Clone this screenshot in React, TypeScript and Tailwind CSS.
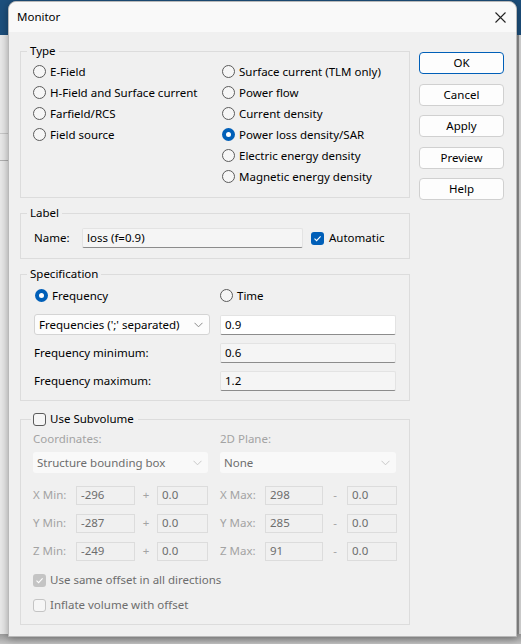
import React from "react";

const FONT = { fontFamily: '"Noto Sans", "Open Sans", sans-serif' };

function Radio({ label, checked = false }: { label: string; checked?: boolean }) {
  return (
    <div className="flex h-[21px] items-center gap-[4px]">
      {checked ? (
        <span className="flex h-[13px] w-[13px] items-center justify-center rounded-full bg-[#005fb8]">
          <span className="h-[5px] w-[5px] rounded-full bg-white" />
        </span>
      ) : (
        <span className="h-[13px] w-[13px] rounded-full border border-[#5b5b5b] bg-[#f6f6f6]" />
      )}
      <span>{label}</span>
    </div>
  );
}

function Check({ checked = false, disabled = false }: { checked?: boolean; disabled?: boolean }) {
  if (checked) {
    return (
      <span
        className={`flex h-[13px] w-[13px] items-center justify-center rounded-[3px] ${
          disabled ? "bg-[#c4c4c4]" : "bg-[#005fb8]"
        }`}
      >
        <svg width="9" height="9" viewBox="0 0 9 9" fill="none">
          <path d="M1.5 4.6 L3.6 6.6 L7.6 2.4" stroke="white" strokeWidth="1.1" />
        </svg>
      </span>
    );
  }
  return (
    <span
      className={`h-[13px] w-[13px] rounded-[3px] border bg-[#f6f6f6] ${
        disabled ? "border-[#c4c4c4]" : "border-[#5b5b5b]"
      }`}
    />
  );
}

function Chevron({ light = false }: { light?: boolean }) {
  return (
    <svg width="9" height="6" viewBox="0 0 9 6" fill="none">
      <path d="M0.5 0.8 L4.5 4.8 L8.5 0.8" stroke={light ? "#c8c8c8" : "#8a8a8a"} strokeWidth="1" />
    </svg>
  );
}

function Field({ value, white = false, className = "" }: { value: string; white?: boolean; className?: string }) {
  return (
    <div
      className={`flex h-[20px] items-center rounded-[2px] border border-[#e3e3e3] border-b-[#8c8c8c] px-[4px] ${
        white ? "bg-white" : "bg-[#f5f5f5]"
      } ${className}`}
    >
      {value}
    </div>
  );
}

function DisField({ value, className = "" }: { value: string; className?: string }) {
  return (
    <div className={`flex h-[19px] items-center border border-[#dcdcdc] bg-[#f0f0f0] px-[4px] text-[#6d6d6d] ${className}`}>
      {value}
    </div>
  );
}

function Btn({ label, primary = false }: { label: string; primary?: boolean }) {
  return (
    <div
      className={`flex h-[22px] w-[85px] items-center justify-center rounded-[4px] border bg-[#fdfdfd] ${
        primary ? "border-[#005fb8]" : "border-[#d0d0d0]"
      }`}
    >
      {label}
    </div>
  );
}

function CoordRow({ axis, min, max }: { axis: string; min: string; max: string }) {
  return (
    <div className="flex h-[28px] items-center">
      <span className="w-[43px] text-[#a3a3a3]">{axis} Min:</span>
      <DisField value={min} className="w-[59px]" />
      <span className="w-[22px] text-center text-[#a3a3a3]">+</span>
      <DisField value="0.0" className="w-[51px]" />
      <span className="ml-[12px] w-[45px] text-[#a3a3a3]">{axis} Max:</span>
      <DisField value={max} className="w-[58px]" />
      <span className="w-[24px] text-center text-[#a3a3a3]">-</span>
      <DisField value="0.0" className="w-[50px]" />
    </div>
  );
}

export default function App() {
  return (
    <div className="relative h-[644px] w-[521px] overflow-hidden bg-[#e9e9e9] text-[11.5px] text-black" style={FONT}>
      {/* backdrop */}
      <div className="absolute left-0 top-0 h-[35px] w-full bg-[#1d4f7c]" />
      <div className="absolute left-0 top-[133px] h-px w-[8px] bg-[#c8c8c8]" />
      <div className="absolute left-0 top-[160px] h-px w-[8px] bg-[#b0b0b0]" />
      <div className="absolute right-0 top-[35px] h-full w-[4px] border-l-2 border-[#8f8f8f] bg-[#d9d9d9]" />
      <div className="absolute bottom-0 left-0 h-[10px] w-full bg-gradient-to-b from-[#9c9c9c] to-[#c4c4c4]" />

      {/* dialog */}
      <div className="relative ml-[8px] mt-[1px] flex h-[636px] w-[509px] flex-col rounded-t-[8px] border border-[#b9b9b9] bg-[#f0f0f0] shadow-[0_2px_8px_rgba(0,0,0,0.35)]">
        <div className="flex h-[30px] items-center justify-between rounded-t-[8px] bg-[#f9f9f9] pl-[8px] pr-[10px]">
          <span>Monitor</span>
          <svg width="11" height="11" viewBox="0 0 11 11" fill="none">
            <path d="M0.5 0.5 L10.5 10.5 M10.5 0.5 L0.5 10.5" stroke="#222" strokeWidth="1.1" />
          </svg>
        </div>

        <div className="flex gap-[9px] pl-[11px] pt-[11px]">
          {/* left column */}
          <div className="flex w-[390px] flex-col">
            <fieldset className="border border-[#dcdcdc] pb-[10px] pl-[12px]">
              <legend className="ml-[-6px] px-[3px] leading-[16px]">Type</legend>
              <div className="mt-[2px] flex">
                <div className="w-[189px]">
                  <Radio label="E-Field" />
                  <Radio label="H-Field and Surface current" />
                  <Radio label="Farfield/RCS" />
                  <Radio label="Field source" />
                </div>
                <div>
                  <Radio label="Surface current (TLM only)" />
                  <Radio label="Power flow" />
                  <Radio label="Current density" />
                  <Radio label="Power loss density/SAR" checked />
                  <Radio label="Electric energy density" />
                  <Radio label="Magnetic energy density" />
                </div>
              </div>
            </fieldset>

            <fieldset className="mt-[7px] border border-[#dcdcdc] pb-[10px] pl-[13px]">
              <legend className="ml-[-7px] px-[3px] leading-[16px]">Label</legend>
              <div className="mt-[7px] flex items-center">
                <span className="w-[48px]">Name:</span>
                <Field value="loss (f=0.9)" className="w-[221px]" />
                <span className="ml-[8px]">
                  <Check checked />
                </span>
                <span className="ml-[5px]">Automatic</span>
              </div>
            </fieldset>

            <fieldset className="mt-[7px] border border-[#dcdcdc] pb-[9px] pl-[13px]">
              <legend className="ml-[-7px] px-[3px] leading-[16px]">Specification</legend>
              <div className="mt-[3px] flex">
                <div className="w-[186px] pl-[1px]">
                  <Radio label="Frequency" checked />
                </div>
                <Radio label="Time" />
              </div>
              <div className="mt-[8px] flex items-center gap-[10px]">
                <div className="flex h-[21px] w-[176px] items-center justify-between rounded-[3px] border border-[#d4d4d4] bg-[#fcfcfc] pl-[4px] pr-[6px]">
                  <span>Frequencies (';' separated)</span>
                  <Chevron />
                </div>
                <Field value="0.9" white className="w-[176px]" />
              </div>
              <div className="mt-[8px] flex items-center">
                <span className="w-[186px]">Frequency minimum:</span>
                <Field value="0.6" className="w-[176px]" />
              </div>
              <div className="mt-[8px] flex items-center">
                <span className="w-[186px]">Frequency maximum:</span>
                <Field value="1.2" className="w-[176px]" />
              </div>
            </fieldset>

            <fieldset className="mt-[10px] border border-[#dcdcdc] pb-[8px] pl-[12px]">
              <legend className="ml-[-2px] flex items-center gap-[4px] pl-[2px] pr-[4px] leading-[16px]">
                <Check />
                <span>Use Subvolume</span>
              </legend>
              <div className="mt-[3px] flex h-[18px] items-center text-[#a3a3a3]">
                <span className="w-[187px]">Coordinates:</span>
                <span>2D Plane:</span>
              </div>
              <div className="mt-[4px] flex items-center gap-[12px] text-[#6d6d6d]">
                <div className="flex h-[21px] w-[175px] items-center justify-between rounded-[3px] bg-[#f9f9f9] pl-[4px] pr-[6px]">
                  <span>Structure bounding box</span>
                  <Chevron light />
                </div>
                <div className="flex h-[21px] w-[176px] items-center justify-between rounded-[3px] bg-[#f9f9f9] pl-[4px] pr-[6px]">
                  <span>None</span>
                  <Chevron light />
                </div>
              </div>
              <div className="mt-[8px]">
                <CoordRow axis="X" min="-296" max="298" />
                <CoordRow axis="Y" min="-287" max="285" />
                <CoordRow axis="Z" min="-249" max="91" />
              </div>
              <div className="mt-[4px] flex h-[22px] items-center gap-[4px] text-[#6d6d6d]">
                <Check checked disabled />
                <span>Use same offset in all directions</span>
              </div>
              <div className="mt-[3px] flex h-[22px] items-center gap-[4px] text-[#6d6d6d]">
                <Check disabled />
                <span>Inflate volume with offset</span>
              </div>
            </fieldset>
          </div>

          {/* buttons */}
          <div className="flex flex-col gap-[9.5px] pt-[9px]">
            <Btn label="OK" primary />
            <Btn label="Cancel" />
            <Btn label="Apply" />
            <Btn label="Preview" />
            <Btn label="Help" />
          </div>
        </div>
      </div>
    </div>
  );
}
